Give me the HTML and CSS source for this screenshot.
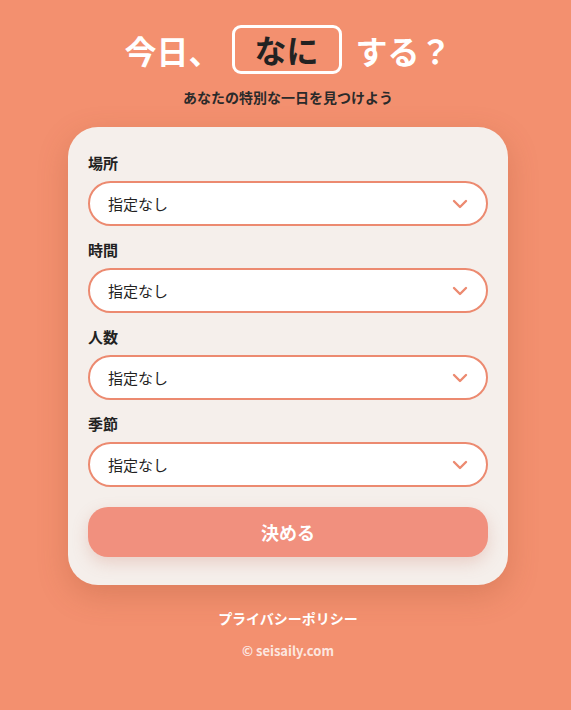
FILE: index.html
```html
<!DOCTYPE html>
<html lang="ja">
<head>
<meta charset="utf-8">
<title>今日、なにする？</title>
<link rel="stylesheet" href="styles.css">
</head>
<body>
<main class="page">
  <h1 class="title">
    <span class="title-part">今日、</span>
    <span class="title-box">なに</span>
    <span class="title-part">する？</span>
  </h1>
  <p class="subtitle">あなたの特別な一日を見つけよう</p>

  <section class="card">
    <div class="field">
      <div class="label">場所</div>
      <div class="select"><span>指定なし</span><svg class="chev" width="16" height="10" viewBox="0 0 16 10"><path d="M2 2 L8 8 L14 2" fill="none" stroke="#ec8a70" stroke-width="2.4" stroke-linecap="round" stroke-linejoin="round"/></svg></div>
    </div>
    <div class="field">
      <div class="label">時間</div>
      <div class="select"><span>指定なし</span><svg class="chev" width="16" height="10" viewBox="0 0 16 10"><path d="M2 2 L8 8 L14 2" fill="none" stroke="#ec8a70" stroke-width="2.4" stroke-linecap="round" stroke-linejoin="round"/></svg></div>
    </div>
    <div class="field">
      <div class="label">人数</div>
      <div class="select"><span>指定なし</span><svg class="chev" width="16" height="10" viewBox="0 0 16 10"><path d="M2 2 L8 8 L14 2" fill="none" stroke="#ec8a70" stroke-width="2.4" stroke-linecap="round" stroke-linejoin="round"/></svg></div>
    </div>
    <div class="field">
      <div class="label">季節</div>
      <div class="select"><span>指定なし</span><svg class="chev" width="16" height="10" viewBox="0 0 16 10"><path d="M2 2 L8 8 L14 2" fill="none" stroke="#ec8a70" stroke-width="2.4" stroke-linecap="round" stroke-linejoin="round"/></svg></div>
    </div>
    <button class="submit">決める</button>
  </section>

  <footer class="footer">
    <a class="privacy">プライバシーポリシー</a>
    <div class="copy">© seisaily.com</div>
  </footer>
</main>
</body>
</html>
```

FILE: styles.css
```css
* { box-sizing: border-box; }
html, body {
  margin: 0;
  padding: 0;
  background: #f3906f;
}
body {
  font-family: "Noto Sans CJK JP", "Noto Sans", sans-serif;
  color: #222;
}
.page {
  display: flex;
  flex-direction: column;
  align-items: center;
  padding-top: 25px;
  padding-left: 5px;
}
.title {
  margin: 0;
  display: flex;
  align-items: center;
  height: 49px;
  font-size: 32px;
  font-weight: 700;
  color: #fff;
  line-height: 1;
}
.title-box {
  display: flex;
  align-items: center;
  justify-content: center;
  width: 110px;
  height: 49px;
  border: 3px solid #fff;
  border-radius: 9px;
  color: #222;
  margin: 0 14px 0 11px;
  padding-bottom: 2px;
}
.subtitle {
  margin: 14px 0 0;
  font-size: 14px;
  font-weight: 700;
  line-height: 18px;
  color: #2a2a2a;
}
.card {
  margin-top: 21px;
  width: 440px;
  background: #f5efeb;
  border-radius: 30px;
  padding: 25px 20px 28px;
  box-shadow: 0 10px 30px rgba(150, 70, 40, 0.25);
  display: flex;
  flex-direction: column;
}
.field {
  display: flex;
  flex-direction: column;
  margin-bottom: 13px;
}
.label {
  font-size: 15px;
  font-weight: 700;
  line-height: 22px;
  color: #222;
  margin-bottom: 7px;
}
.select {
  height: 45px;
  background: #fff;
  border: 2px solid #ec8a70;
  border-radius: 23px;
  display: flex;
  align-items: center;
  justify-content: space-between;
  padding: 0 18px 0 18px;
  font-size: 15px;
  color: #222;
}
.chev { display: block; margin-top: 1px; }
.submit {
  margin-top: 7px;
  height: 50px;
  border: none;
  border-radius: 20px;
  background: #f1907e;
  color: #fff;
  font-family: inherit;
  font-size: 18px;
  font-weight: 700;
  box-shadow: 0 6px 16px rgba(200, 110, 90, 0.25);
}
.footer {
  margin-top: 23px;
  display: flex;
  flex-direction: column;
  align-items: center;
}
.privacy {
  font-size: 14px;
  font-weight: 700;
  line-height: 20px;
  color: #fff;
}
.copy {
  margin-top: 13px;
  font-size: 13px;
  font-weight: 700;
  line-height: 20px;
  color: rgba(255, 255, 255, 0.8);
}
```
